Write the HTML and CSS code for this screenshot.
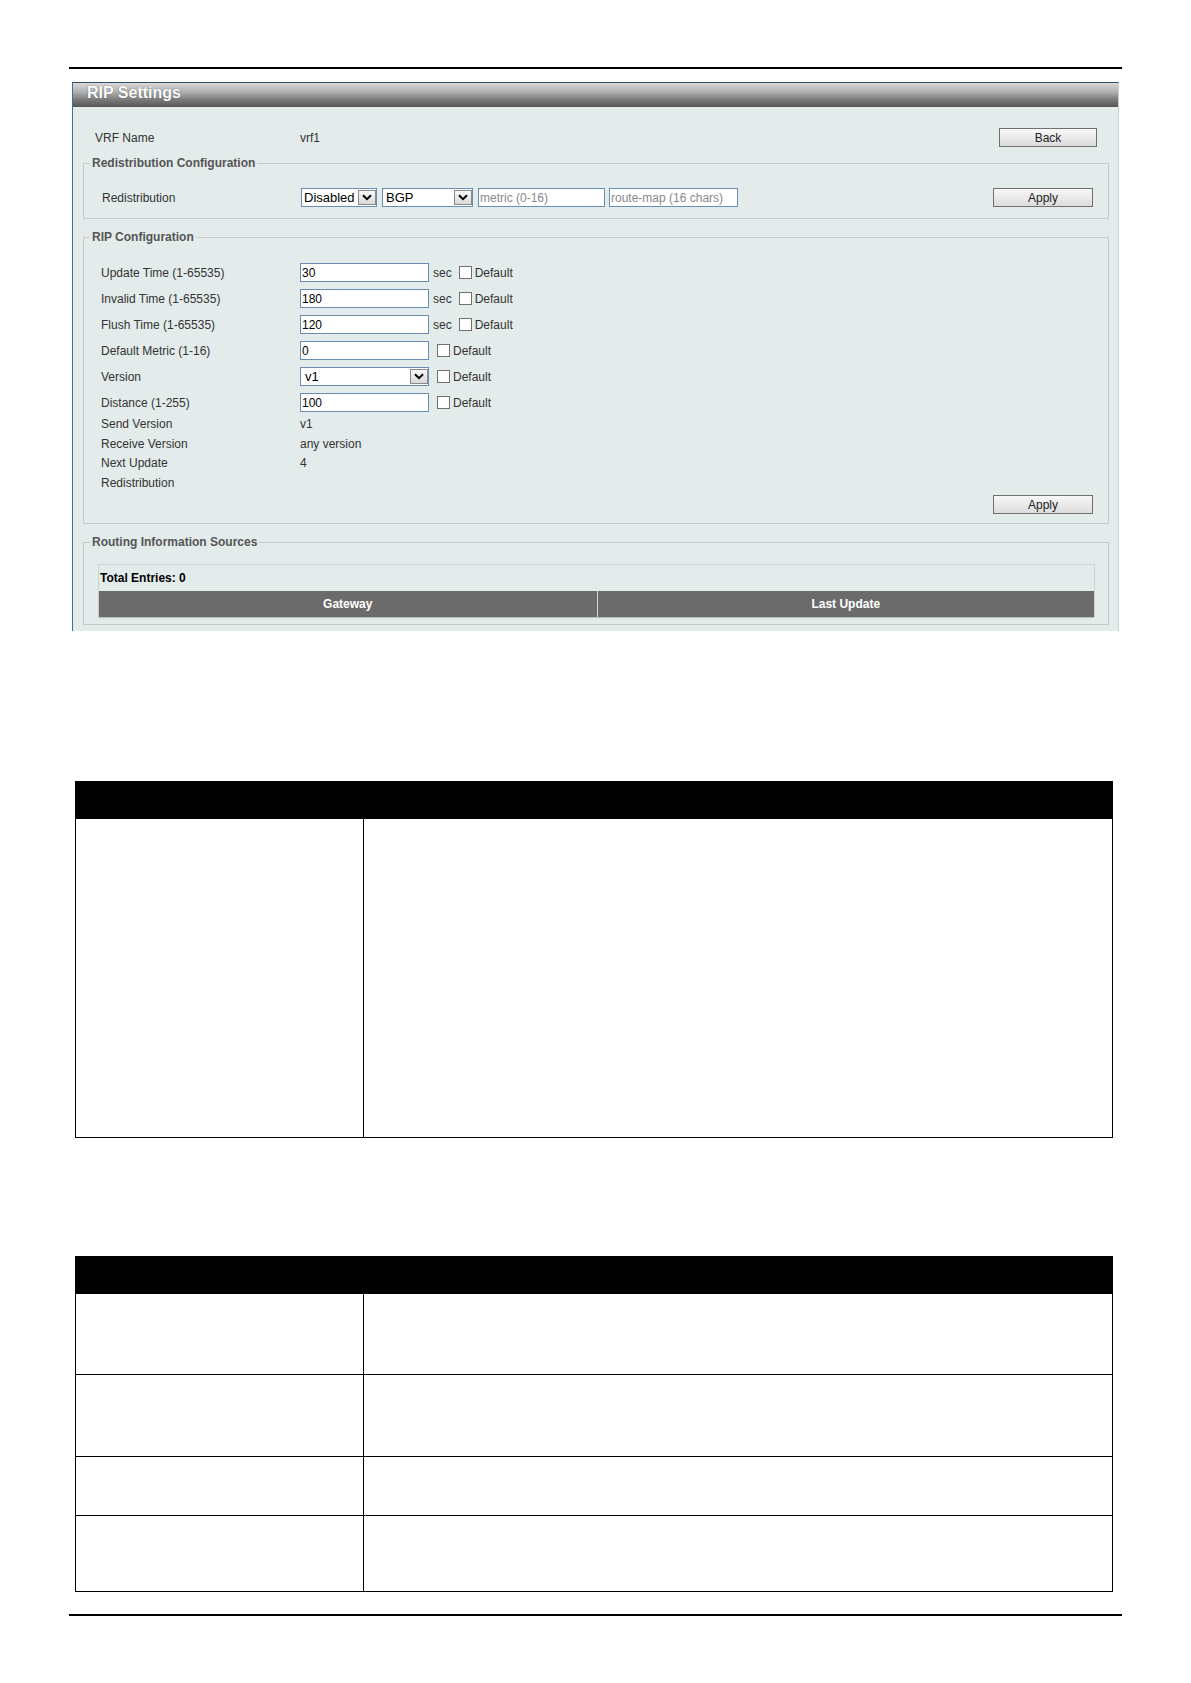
FILE: index.html
```html
<!DOCTYPE html>
<html lang="en">
<head>
<meta charset="utf-8">
<title>RIP Settings</title>
<link rel="stylesheet" href="styles.css">
</head>
<body>
<div class="page">
  <div class="rule"></div>

  <div class="panel">
    <div class="panel-title">RIP Settings</div>
    <div class="panel-body">
      <div class="vrf-row">
        <span class="vrf-label">VRF Name</span>
        <span class="vrf-value">vrf1</span>
        <button class="btn btn-back" type="button">Back</button>
      </div>

      <fieldset class="fs fs-redis">
        <legend>Redistribution Configuration</legend>
        <div class="redis-row">
          <span class="lbl">Redistribution</span>
          <span class="sel sel-state">
            <select><option>Disabled</option><option>Enabled</option></select>
            <span class="arrow"><svg width="10" height="7" viewBox="0 0 10 7"><path d="M1 1.2 L5 5.2 L9 1.2" fill="none" stroke="#000" stroke-width="2"/></svg></span>
          </span>
          <span class="sel sel-proto">
            <select><option>BGP</option><option>OSPF</option><option>Static</option><option>Connected</option></select>
            <span class="arrow"><svg width="10" height="7" viewBox="0 0 10 7"><path d="M1 1.2 L5 5.2 L9 1.2" fill="none" stroke="#000" stroke-width="2"/></svg></span>
          </span>
          <input class="txt txt-metric" type="text" placeholder="metric (0-16)">
          <input class="txt txt-route" type="text" placeholder="route-map (16 chars)">
          <button class="btn btn-apply" type="button">Apply</button>
        </div>
      </fieldset>

      <fieldset class="fs fs-rip">
        <legend>RIP Configuration</legend>
        <div class="form-rows">
          <div class="frow">
            <span class="lbl">Update Time (1-65535)</span>
            <input class="txt" type="text" value="30">
            <span class="sec">sec</span>
            <input class="cb" type="checkbox">
            <span class="def">Default</span>
          </div>
          <div class="frow">
            <span class="lbl">Invalid Time (1-65535)</span>
            <input class="txt" type="text" value="180">
            <span class="sec">sec</span>
            <input class="cb" type="checkbox">
            <span class="def">Default</span>
          </div>
          <div class="frow">
            <span class="lbl">Flush Time (1-65535)</span>
            <input class="txt" type="text" value="120">
            <span class="sec">sec</span>
            <input class="cb" type="checkbox">
            <span class="def">Default</span>
          </div>
          <div class="frow">
            <span class="lbl">Default Metric (1-16)</span>
            <input class="txt" type="text" value="0">
            <input class="cb cb-nosec" type="checkbox">
            <span class="def">Default</span>
          </div>
          <div class="frow">
            <span class="lbl">Version</span>
            <span class="sel sel-version">
              <select><option>v1</option><option>v2</option></select>
              <span class="arrow"><svg width="10" height="7" viewBox="0 0 10 7"><path d="M1 1.2 L5 5.2 L9 1.2" fill="none" stroke="#000" stroke-width="2"/></svg></span>
            </span>
            <input class="cb cb-nosec" type="checkbox">
            <span class="def">Default</span>
          </div>
          <div class="frow">
            <span class="lbl">Distance (1-255)</span>
            <input class="txt" type="text" value="100">
            <input class="cb cb-nosec" type="checkbox">
            <span class="def">Default</span>
          </div>
        </div>
        <div class="info-rows">
          <div class="info"><span class="lbl">Send Version</span><span class="val">v1</span></div>
          <div class="info"><span class="lbl">Receive Version</span><span class="val">any version</span></div>
          <div class="info"><span class="lbl">Next Update</span><span class="val">4</span></div>
          <div class="info"><span class="lbl">Redistribution</span><span class="val"></span></div>
        </div>
        <div class="apply-row">
          <button class="btn btn-apply" type="button">Apply</button>
        </div>
      </fieldset>

      <fieldset class="fs fs-ris">
        <legend>Routing Information Sources</legend>
        <div class="ris-box">
          <div class="ris-total">Total Entries: 0</div>
          <div class="ris-head">
            <div class="ris-col">Gateway</div>
            <div class="ris-col ris-col-2">Last Update</div>
          </div>
        </div>
      </fieldset>
    </div>
  </div>

  <table class="doc-table doc-table-1">
    <thead>
      <tr><th class="c1"></th><th></th></tr>
    </thead>
    <tbody>
      <tr class="r-tall"><td class="c1"></td><td></td></tr>
    </tbody>
  </table>

  <table class="doc-table doc-table-2">
    <thead>
      <tr><th class="c1"></th><th></th></tr>
    </thead>
    <tbody>
      <tr class="r-a"><td class="c1"></td><td></td></tr>
      <tr class="r-b"><td class="c1"></td><td></td></tr>
      <tr class="r-c"><td class="c1"></td><td></td></tr>
      <tr class="r-d"><td class="c1"></td><td></td></tr>
    </tbody>
  </table>

  <div class="rule rule-bottom"></div>
</div>
</body>
</html>
```

FILE: styles.css
```css
* {
  box-sizing: border-box;
}

html, body {
  margin: 0;
  padding: 0;
  background: #fff;
}

body {
  font-family: "Liberation Sans", Arial, sans-serif;
  font-size: 12px;
  color: #333;
}

.page {
  width: 1191px;
  padding-top: 67px;
  padding-bottom: 40px;
}

.rule {
  margin-left: 69px;
  width: 1053px;
  height: 2px;
  background: #000;
}

.rule-bottom {
  margin-top: 22px;
}

/* ---------- Panel ---------- */
.panel {
  margin: 13px 0 0 72px;
  width: 1047px;
  border-top: 1px solid #2c4f6b;
  border-left: 1px solid #3a71a2;
  border-right: 1px solid #c7d0d0;
  background: #e4ebeb;
}

.panel-title {
  height: 24px;
  padding: 0 0 4px 14px;
  line-height: 20px;
  font-size: 16px;
  font-weight: bold;
  color: #fff;
  text-shadow: 0 0 1px #3a3a3a;
  background: linear-gradient(to bottom, #d9d9d9 0%, #b3b3b3 35%, #7a7a7a 70%, #555 100%);
}

.panel-body {
  padding: 21px 9px 6px 10px;
}

.vrf-row {
  display: flex;
  align-items: center;
  height: 19px;
  padding: 0 12px;
}

.vrf-label {
  width: 205px;
}

.btn {
  height: 19px;
  padding: 0;
  margin: 0;
  border: 1px solid #707070;
  border-radius: 0;
  background: linear-gradient(to bottom, #f8f8f8, #dcdcdc);
  font-family: "Liberation Sans", Arial, sans-serif;
  font-size: 12px;
  color: #222;
}

.btn-back {
  width: 98px;
  margin-left: auto;
}

.btn-apply {
  width: 100px;
}

/* ---------- Fieldsets ---------- */
.fs {
  margin: 9px 0 0;
  padding: 17px 0 11px;
  border: 1px solid #c4cccc;
  min-width: 0;
}

.fs legend {
  margin-left: 6px;
  padding: 0 2px;
  font-size: 12px;
  line-height: 15px;
  font-weight: bold;
  color: #555;
}

.fs-rip,
.fs-ris {
  margin-top: 11px;
}

.fs-rip {
  padding-top: 18px;
  padding-bottom: 9px;
}

.fs-ris {
  padding-top: 14px;
  padding-bottom: 7px;
}

.lbl {
  width: 199px;
  flex: none;
}

.redis-row {
  display: flex;
  align-items: center;
  height: 19px;
  padding: 0 15px 0 18px;
}

.redis-row .btn-apply {
  margin-left: auto;
}

/* selects */
.sel {
  position: relative;
  display: inline-block;
  height: 19px;
  flex: none;
}

.sel select {
  -webkit-appearance: none;
  appearance: none;
  display: block;
  width: 100%;
  height: 19px;
  margin: 0;
  padding: 0 0 0 2px;
  border: 1px solid #6a8db3;
  border-radius: 0;
  background: #fff;
  font-family: "Liberation Sans", Arial, sans-serif;
  font-size: 13px;
  color: #000;
}

.sel .arrow {
  position: absolute;
  right: 1px;
  top: 2px;
  width: 18px;
  height: 15px;
  border: 1px solid #8a8a8a;
  background: linear-gradient(to bottom, #f9f9f9, #d8d8d8);
  display: flex;
  align-items: center;
  justify-content: center;
  pointer-events: none;
}

.sel-state {
  width: 76px;
}

.sel-proto {
  width: 91px;
  margin-left: 5px;
}

.sel-proto select {
  padding-left: 3px;
}

.sel-version {
  width: 129px;
  margin-right: 4px;
}

.sel-version select {
  padding-left: 4px;
}

/* text inputs */
.txt {
  width: 129px;
  height: 19px;
  margin: 0 4px 0 0;
  padding: 0 1px;
  border: 1px solid #6a8db3;
  border-radius: 0;
  background: #fff;
  font-family: "Liberation Sans", Arial, sans-serif;
  font-size: 12px;
  color: #000;
  flex: none;
}

.txt::placeholder {
  color: #8a8a8a;
}

.txt-metric {
  width: 127px;
  margin-left: 5px;
}

.txt-route {
  margin-right: 0;
}

/* checkbox rows */
.form-rows {
  display: flex;
  flex-direction: column;
  gap: 7px;
  padding-left: 17px;
}

.frow {
  display: flex;
  align-items: center;
  height: 19px;
}

.sec {
  flex: none;
}

.cb {
  -webkit-appearance: none;
  appearance: none;
  width: 13px;
  height: 13px;
  margin: 0 0 0 7px;
  border: 1px solid #707070;
  background: #fff;
  flex: none;
}

.cb-nosec {
  margin-left: 4px;
}

.def {
  margin-left: 3px;
}

.info-rows {
  margin-top: 3px;
  padding-left: 17px;
}

.info {
  display: flex;
  height: 19.5px;
  line-height: 19.5px;
}

.apply-row {
  display: flex;
  justify-content: flex-end;
  margin-top: 2px;
  padding-right: 15px;
}

/* routing information sources */
.ris-box {
  margin: 0 13px 0 14px;
  border: 1px solid #cbd3d3;
  border-bottom: none;
}

.ris-total {
  height: 26px;
  line-height: 26px;
  padding-left: 1px;
  font-weight: bold;
  color: #000;
}

.ris-head {
  display: grid;
  grid-template-columns: 1fr 1fr;
  height: 26px;
  background: #6b6b6b;
  box-shadow: 0 1px 1px rgba(0, 0, 0, 0.18);
}

.ris-col {
  line-height: 26px;
  text-align: center;
  font-weight: bold;
  color: #fff;
}

.ris-col-2 {
  border-left: 1px solid #d6d6d6;
}

/* ---------- Document tables ---------- */
.doc-table {
  margin-left: 75px;
  width: 1038px;
  border-collapse: separate;
  border-spacing: 0;
  border: 1px solid #000;
  table-layout: fixed;
}

.doc-table-1 {
  margin-top: 150px;
}

.doc-table-2 {
  margin-top: 118px;
}

.doc-table th {
  height: 36px;
  padding: 0;
  background: #000;
}

.doc-table td {
  padding: 0;
  border-top: 1px solid #000;
}

.doc-table .c1 {
  width: 288px;
}

.doc-table td.c1 {
  border-right: 1px solid #000;
}

.doc-table th.c1 {
  border-right: 1px solid #000;
}

.r-tall td { height: 319px; }
.r-a td { height: 81px; }
.r-b td { height: 82px; }
.r-c td { height: 59px; }
.r-d td { height: 76px; }
```
